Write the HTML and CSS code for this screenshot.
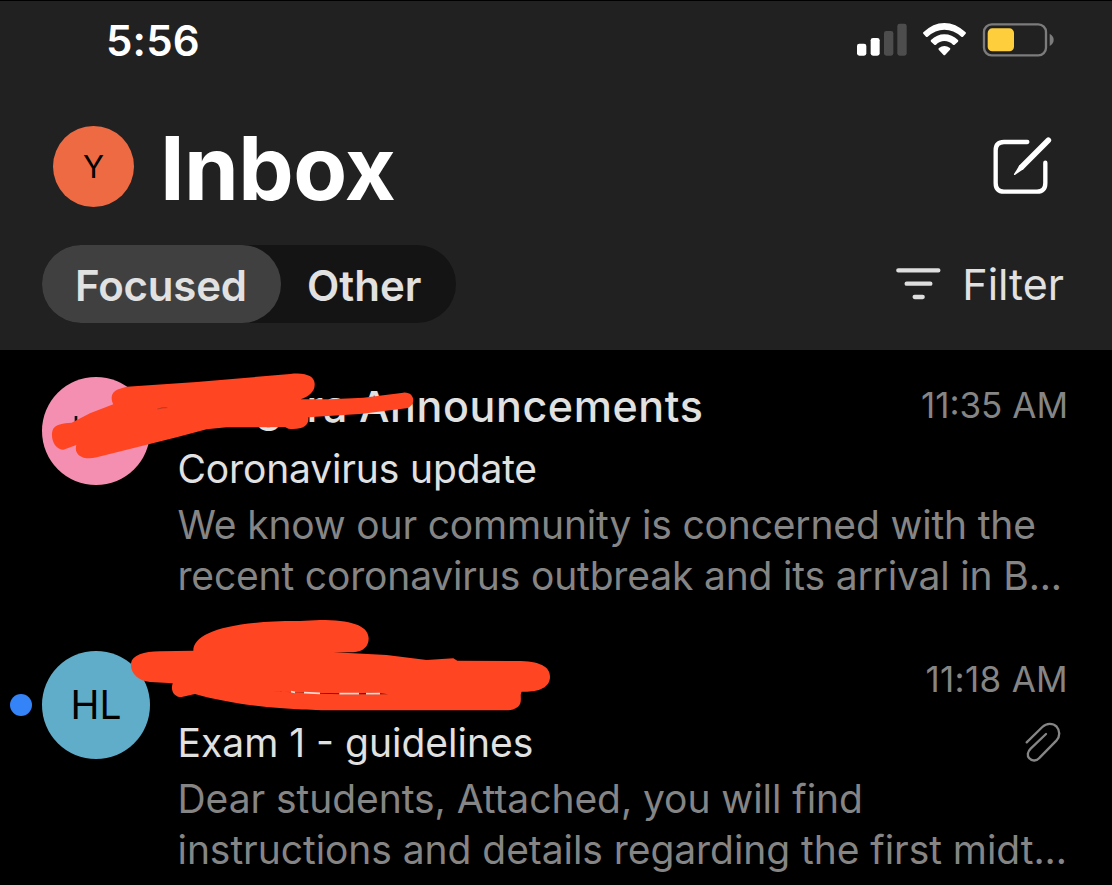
FILE: index.html
```html
<!DOCTYPE html>
<html lang="en">
<head>
<meta charset="utf-8">
<title>Inbox</title>
<link rel="stylesheet" href="styles.css">
</head>
<body>
<header class="header">
  <div class="status">
    <span class="clock">5:56</span>
    <svg class="status-icons" width="200" height="40" viewBox="0 0 600 120">
      <g fill="#fff"><rect x="12" y="71" width="28" height="36" rx="7"/><rect x="53" y="54" width="27" height="53" rx="7"/></g>
      <g fill="#4d4d4d"><rect x="93" y="33" width="28" height="74" rx="7"/><rect x="133" y="11" width="28" height="96" rx="7"/></g>
      <g fill="#fff">
        <path d="M211 37Q240 9 274 9Q308 9 338 37Q340 39 338 41L330 50Q328 52 325 50Q302 29 274 29Q247 29 224 50Q221 52 219 50L211 41Q209 39 211 37Z"/>
        <path d="M234 60Q252 43 274 43Q297 43 315 60Q317 62 315 65L305 74Q303 76 300 74Q289 63 274 63Q260 63 249 74Q246 76 244 74L234 65Q232 62 234 60Z"/>
        <path d="M258 84Q274 72 291 84Q293 86 291 89L277 104Q274 107 271 104L257 89Q255 86 258 84Z"/>
      </g>
      <rect x="393" y="13" width="186" height="93" rx="23" fill="none" stroke="#7c7c7c" stroke-width="7"/>
      <rect x="404" y="25" width="79" height="69" rx="14" fill="#ffce3d"/>
      <path d="M590 41Q602 48 602 59Q602 71 590 78Z" fill="#7c7c7c"/>
    </svg>
  </div>
  <div class="title-row">
    <span class="avatar avatar-me">Y</span>
    <h1 class="title">Inbox</h1>
    <svg class="compose" width="60" height="60" viewBox="0 0 180 180" fill="none" stroke="#fff" stroke-width="13" stroke-linecap="round" stroke-linejoin="round">
      <path d="M112 24H42Q17 24 17 49V147Q17 173 42 173H141Q166 173 166 147V86"/>
      <path d="M175 19L95 99" stroke-width="17"/>
      <path d="M89 93L72 120Q71 125 76 122L101 105Z" fill="#fff" stroke="none"/>
    </svg>
  </div>
  <div class="tabs-row">
    <nav class="tabs">
      <span class="tab tab-active">Focused</span>
      <span class="tab">Other</span>
    </nav>
    <div class="filter">
      <svg width="46" height="40" viewBox="0 0 138 120" stroke="#dedede" stroke-width="13" stroke-linecap="round"><path d="M7 19H127M32 59H103M56 99H80"/></svg>
      <span class="filter-label">Filter</span>
    </div>
  </div>
</header>
<main>
  <article class="mail">
    <div class="mail-side"><span class="avatar avatar-pink"></span></div>
    <div class="mail-body">
      <div class="line line-top"><span class="sender">gara <span class="sender-main">Announcements</span></span><time class="time">11:35 AM</time></div>
      <div class="line"><span class="subject subject-a">Coronavirus update</span></div>
      <p class="preview preview-a">We know our community is concerned with the<br>recent coronavirus outbreak and its arrival in B...</p>
    </div>
    <svg class="scribble" width="600" height="150" viewBox="-90 0 1800 450">
      <path d="M134 198h8v20h-8z" fill="#111"/>
      <path d="M265 118L290 110L500 96L780 72C830 66 856 80 854 105C854 125 835 140 812 148L900 148L1000 143L1120 128C1155 125 1160 165 1130 175L990 192L835 202C838 225 820 240 775 236L765 231L590 232L530 238L440 262L200 322C160 332 130 315 139 285L100 299C75 300 60 265 68 240C75 222 100 220 125 218L180 190L250 163C240 145 245 125 265 118Z" fill="#ff4521"/>
      <path d="M382 177Q397 172 412 173Q397 173 382 177Z" fill="#a63823" stroke="#a63823"/>
    </svg>
  </article>
  <article class="mail">
    <div class="mail-side"><span class="unread"></span><span class="avatar avatar-blue">HL</span></div>
    <div class="mail-body">
      <div class="line line-top"><span></span><time class="time time-b">11:18 AM</time></div>
      <div class="line"><span class="subject">Exam 1 - guidelines</span>
        <svg class="clip" width="40" height="44" viewBox="0 0 120 132" fill="none" stroke="#858585" stroke-width="7" stroke-linecap="round"><path d="M14 67L61 21C74 8 93 9 104 20C114 31 115 49 103 62L53 113C43 124 30 124 22 115C14 107 17 95 26 86L72 42"/></svg>
      </div>
      <p class="preview preview-b">Dear students, Attached, you will find<br>instructions and details regarding the first midt...</p>
    </div>
    <svg class="scribble" width="600" height="150" viewBox="0 72 1800 450">
      <path d="M580 152C580 100 680 62 900 63L960 60C1050 60 1105 75 1106 115C1106 140 1090 155 1060 157L1000 157L1090 161L1160 165L1280 180L1360 175L1372 182L1550 183C1620 183 1650 200 1650 230C1650 265 1610 277 1565 275C1560 285 1564 290 1562 305C1560 320 1545 330 1520 331L1000 331C900 330 850 325 800 321C720 313 640 298 585 282L545 291C525 292 510 275 518 250L450 246C415 242 390 220 393 190C397 165 430 155 480 154Z" fill="#ff4521"/>
      <path d="M810 272Q940 284 1165 283Q1120 276 1080 280Q920 280 810 272Z" fill="#5a1409"/>
      <path d="M873 275L885 277M912 278L960 280M1018 281H1077M1098 281H1140" stroke="#eedbd6" stroke-width="5"/>
    </svg>
  </article>
</main>
</body>
</html>
```
FILE: styles.css
```css
* { box-sizing: border-box; }
body {
  margin: 0;
  height: 885px;
  overflow: hidden;
  background: #000;
  color: #e1e1e1;
  font-family: Inter, "Liberation Sans", sans-serif;
  white-space: nowrap;
}
.header {
  height: 350px;
  background: #212121;
  border-top: 1px solid #000;
}
.status {
  height: 79px;
  padding: 0 59px 0 106px;
  display: flex;
  justify-content: space-between;
  align-items: center;
}
.clock { color: #fff; font-size: 42px; font-weight: 600; line-height: 50px; letter-spacing: 0.2px; }
.status-icons { overflow: visible; margin-bottom: 1px; }
.title-row {
  height: 165px;
  padding: 8px 62px 0 53px;
  display: flex;
  align-items: center;
}
.avatar {
  flex: none;
  display: flex;
  align-items: center;
  justify-content: center;
  border-radius: 50%;
  color: #000;
}
.avatar-me { width: 81px; height: 81px; background: #ed6a42; font-size: 31px; }
.title {
  margin: 3px 0 0 26px;
  color: #fff;
  font-size: 88px;
  line-height: 88px;
  font-weight: 700;
  letter-spacing: -0.6px;
}
.compose { margin: 0 0 5px auto; overflow: visible; }
.tabs-row {
  height: 78px;
  padding: 0 48px 0 42px;
  display: flex;
  align-items: center;
  justify-content: space-between;
}
.tabs {
  width: 414px;
  height: 78px;
  border-radius: 39px;
  background: #141414;
  display: flex;
  font-size: 42px;
  font-weight: 600;
}
.tab { display: flex; align-items: center; padding: 3px 0 0 26px; }
.tab-active { width: 239px; padding-left: 33px; border-radius: 39px; background: #404040; letter-spacing: -0.2px; }
.filter { display: flex; align-items: center; gap: 20px; }
.filter-label { font-size: 43px; line-height: 50px; }
.mail { position: relative; height: 274px; display: flex; }
.mail-side {
  flex: none;
  width: 177.5px;
  height: 161px;
  padding-left: 42px;
  display: flex;
  align-items: center;
}
.avatar-pink, .avatar-blue { width: 108px; height: 108px; font-size: 39px; }
.avatar-pink { background: #f48fb1; }
.avatar-blue { background: #60adc9; }
.unread {
  flex: none;
  width: 22px;
  height: 22px;
  margin: 0 10px 0 -32px;
  border-radius: 50%;
  background: #3483f7;
}
.mail-body { flex: 1; min-width: 0; padding: 25px 44px 0 0; }
.line { height: 62px; display: flex; justify-content: space-between; align-items: center; }
.line-top { padding-bottom: 2px; }
.sender { padding: 2px 0 0 78px; font-size: 43px; font-weight: 500; }
.sender-main { letter-spacing: 0.6px; }
.subject { font-size: 39px; }
.subject-a { letter-spacing: -0.15px; }
.time { color: #858585; font-size: 35px; }
.time-b { letter-spacing: 0.3px; }
.clip { margin-right: 6px; }
.preview { margin: 0; color: #858585; font-size: 39px; line-height: 51px; }
.preview-a { letter-spacing: -0.17px; }
.preview-b { letter-spacing: -0.06px; }
.scribble { position: absolute; left: 0; top: 0; overflow: visible; }
```
